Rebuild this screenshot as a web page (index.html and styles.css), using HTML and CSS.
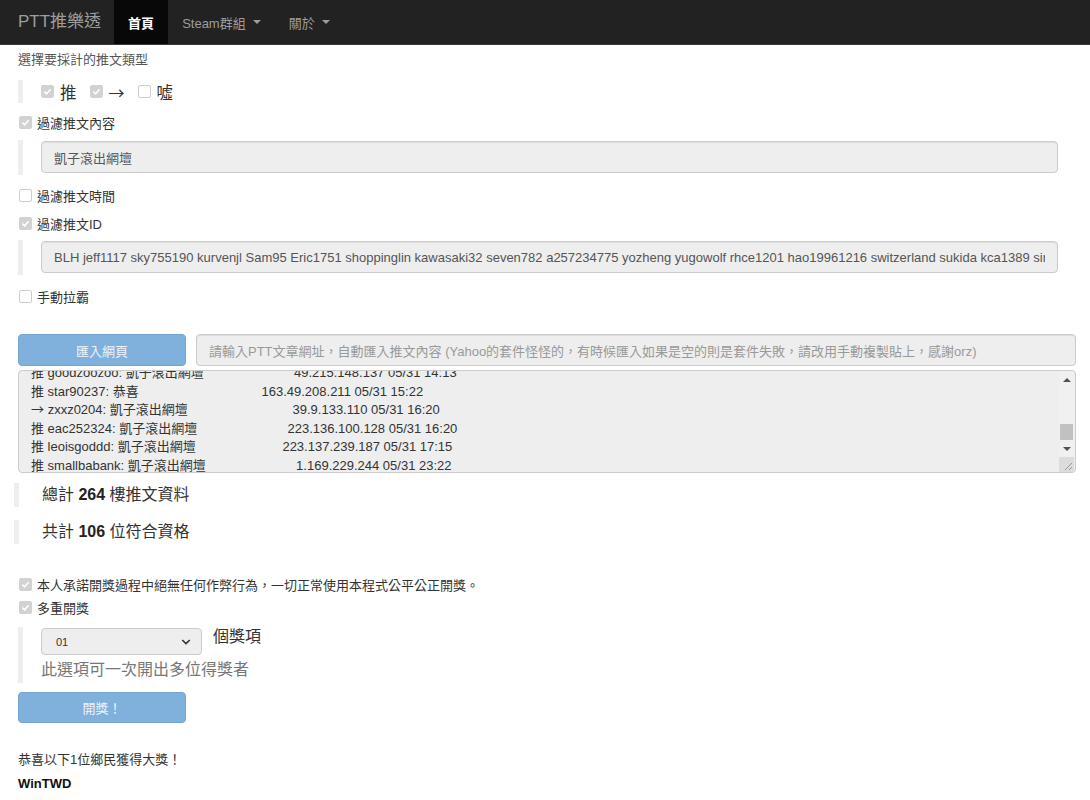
FILE: index.html
```html
<!DOCTYPE html>
<html lang="zh-Hant">
<head>
<meta charset="utf-8">
<title>PTT推樂透</title>
<link rel="stylesheet" href="styles.css">
</head>
<body>
<nav class="navbar">
  <div class="brand">PTT推樂透</div>
  <div class="nav-item active">首頁</div>
  <div class="nav-item">Steam群組<span class="caret"></span></div>
  <div class="nav-item">關於<span class="caret"></span></div>
</nav>

<main class="page">
  <div class="section-label">選擇要採計的推文類型</div>

  <div class="quote quote-types">
    <span class="cb checked"><svg viewBox="0 0 12 12"><path d="M2.6 6.2 L5 8.5 L9.4 3.6"/></svg></span><span class="type-text">推</span>
    <span class="cb checked"><svg viewBox="0 0 12 12"><path d="M2.6 6.2 L5 8.5 L9.4 3.6"/></svg></span><span class="type-text type-arrow">→</span>
    <span class="cb"></span><span class="type-text">噓</span>
  </div>

  <div class="check-row row-content"><span class="cb checked"><svg viewBox="0 0 12 12"><path d="M2.6 6.2 L5 8.5 L9.4 3.6"/></svg></span>過濾推文內容</div>
  <div class="quote quote-input q-content">
    <div class="control"><div class="control-text">凱子滾出網壇</div></div>
  </div>

  <div class="check-row row-time"><span class="cb"></span>過濾推文時間</div>
  <div class="check-row row-id"><span class="cb checked"><svg viewBox="0 0 12 12"><path d="M2.6 6.2 L5 8.5 L9.4 3.6"/></svg></span>過濾推文ID</div>
  <div class="quote quote-input q-id">
    <div class="control"><div class="control-text">BLH jeff1117 sky755190 kurvenjl Sam95 Eric1751 shoppinglin kawasaki32 seven782 a257234775 yozheng yugowolf rhce1201 hao19961216 switzerland sukida kca1389 sirius0912 mayday55</div></div>
  </div>

  <div class="check-row row-manual"><span class="cb"></span>手動拉霸</div>

  <div class="import-row">
    <div class="btn">匯入網頁</div>
    <div class="control url-input"><div class="control-text placeholder">請輸入PTT文章網址，自動匯入推文內容 (Yahoo的套件怪怪的，有時候匯入如果是空的則是套件失敗，請改用手動複製貼上，感謝orz)</div></div>
  </div>

  <div class="textarea">
    <div class="ta-view">
<pre class="ta-content">推 goodzoozoo: 凱子滾出網壇                         49.215.148.137 05/31 14:13
推 star90237: 恭喜                                  163.49.208.211 05/31 15:22
<span class="ta-arrow">→</span> zxxz0204: 凱子滾出網壇                             39.9.133.110 05/31 16:20
推 eac252324: 凱子滾出網壇                         223.136.100.128 05/31 16:20
推 leoisgoddd: 凱子滾出網壇                        223.137.239.187 05/31 17:15
推 smallbabank: 凱子滾出網壇                         1.169.229.244 05/31 23:22</pre>
    </div>
    <div class="scrollbar">
      <div class="sb-btn"><span class="arrow-up"></span></div>
      <div class="sb-track"><div class="sb-thumb"></div></div>
      <div class="sb-btn"><span class="arrow-down"></span></div>
      <div class="sb-corner"><svg viewBox="0 0 15 15"><path d="M13 6 L6 13 M13 10 L10 13"/></svg></div>
    </div>
  </div>

  <div class="quote stat stat-1">總計 <b>264</b> 樓推文資料</div>
  <div class="quote stat stat-2">共計 <b>106</b> 位符合資格</div>

  <div class="check-row row-promise"><span class="cb checked"><svg viewBox="0 0 12 12"><path d="M2.6 6.2 L5 8.5 L9.4 3.6"/></svg></span>本人承諾開獎過程中絕無任何作弊行為，一切正常使用本程式公平公正開獎。</div>
  <div class="check-row row-multi"><span class="cb checked"><svg viewBox="0 0 12 12"><path d="M2.6 6.2 L5 8.5 L9.4 3.6"/></svg></span>多重開獎</div>

  <div class="quote quote-multi">
    <div class="multi-line">
      <div class="select"><span>01</span><svg viewBox="0 0 10 6"><path d="M1.2 1 L5 4.6 L8.8 1"/></svg></div>
      <span class="multi-unit">個獎項</span>
    </div>
    <div class="multi-help">此選項可一次開出多位得獎者</div>
  </div>

  <div class="btn btn-draw">開獎！</div>

  <div class="result-title">恭喜以下1位鄉民獲得大獎！</div>
  <div class="winner">WinTWD</div>
</main>
</body>
</html>
```

FILE: styles.css
```css
* { box-sizing: border-box; }

body {
  margin: 0;
  font-family: "Liberation Sans", "Noto Sans CJK TC", sans-serif;
  font-size: 13px;
  color: #333;
  background: #fff;
}

/* ---------- navbar ---------- */
.navbar {
  display: flex;
  align-items: stretch;
  height: 45px;
  background: #222;
  border-bottom: 1px solid #3a3a3a;
}
.brand {
  padding: 0 13px 0 18px;
  line-height: 44px;
  font-size: 17px;
  color: #9d9d9d;
}
.nav-item {
  display: flex;
  align-items: center;
  padding: 0 14px;
  font-size: 13px;
  color: #9d9d9d;
}
.nav-item.active {
  background: #080808;
  color: #fff;
  font-weight: bold;
}
.caret {
  display: inline-block;
  margin-left: 7px;
  border-top: 4px solid #9d9d9d;
  border-left: 4px solid transparent;
  border-right: 4px solid transparent;
}

/* ---------- page ---------- */
.page {
  padding: 0 14px 0 18px;
}
.section-label {
  height: 30px;
  line-height: 30px;
  font-size: 13px;
  color: #555;
}

.quote {
  border-left: 5px solid #eee;
  padding: 0 18px;
}

/* checkbox */
.cb {
  display: inline-flex;
  align-items: center;
  justify-content: center;
  flex: none;
  width: 13px;
  height: 13px;
  border: 1px solid #cdcdcd;
  border-radius: 2px;
  background: #fff;
}
.cb.checked {
  background: #d2d2d2;
  border-color: #d2d2d2;
}
.cb svg {
  width: 11px;
  height: 11px;
}
.cb svg path {
  fill: none;
  stroke: #fff;
  stroke-width: 1.7;
}

.quote-types {
  margin-top: 5px;
  height: 23px;
  display: flex;
  align-items: center;
}
.quote-types .cb { margin-right: 6px; }
.type-text {
  font-size: 16.5px;
  color: #333;
  margin-right: 13px;
}
.type-arrow {
  font-family: "Noto Sans CJK TC", sans-serif;
  font-size: 16px;
}

.check-row {
  height: 20px;
  display: flex;
  align-items: center;
  padding-bottom: 2px;
  font-size: 13px;
  color: #333;
}
.check-row .cb {
  margin-left: 1px;
  margin-right: 5px;
}
.row-content { margin-top: 10px; }
.q-content { margin-top: 7px; }
.row-time { margin-top: 11px; }
.row-id { margin-top: 8px; }
.q-id { margin-top: 6px; }
.row-manual { margin-top: 12px; }

.quote-input {
  height: 35px;
  padding-top: 1px;
}
.control {
  height: 32px;
  display: flex;
  align-items: center;
  padding: 0 12px;
  background: #eee;
  border: 1px solid #ccc;
  border-radius: 4px;
  box-shadow: inset 0 1px 1px rgba(0,0,0,.075);
}
.control-text {
  flex: 1;
  overflow: hidden;
  white-space: nowrap;
  font-size: 13px;
  color: #555;
}
.placeholder { color: #999; }

/* ---------- import ---------- */
.import-row {
  margin-top: 27px;
  display: flex;
  gap: 10px;
  height: 32px;
}
.btn {
  width: 168px;
  height: 32px;
  display: flex;
  align-items: center;
  justify-content: center;
  background: #80b0dc;
  border: 1px solid #74a4d2;
  border-radius: 4px;
  color: #eef4fa;
  font-size: 13px;
}
.url-input {
  flex: 1;
  height: 32px;
}

/* ---------- textarea ---------- */
.textarea {
  margin-top: 4px;
  height: 103px;
  display: flex;
  background: #eee;
  border: 1px solid #ccc;
  border-radius: 4px;
  overflow: hidden;
}
.ta-view {
  flex: 1;
  overflow: hidden;
  padding-left: 12px;
}
.ta-content {
  margin: -7px 0 0;
  font-family: "Liberation Sans", "Noto Sans CJK TC", sans-serif;
  font-size: 13px;
  line-height: 18.5px;
  color: #333;
  white-space: pre;
}
.ta-arrow {
  font-family: "Noto Sans CJK TC", sans-serif;
  line-height: 1;
}
.scrollbar {
  width: 15px;
  margin-right: 1px;
  display: flex;
  flex-direction: column;
  background: #f0f0f0;
}
.sb-btn {
  height: 17px;
  display: flex;
  align-items: center;
  justify-content: center;
}
.arrow-up {
  border-bottom: 4px solid #505050;
  border-left: 4px solid transparent;
  border-right: 4px solid transparent;
}
.arrow-down {
  border-top: 4px solid #505050;
  border-left: 4px solid transparent;
  border-right: 4px solid transparent;
}
.sb-track {
  flex: 1;
  display: flex;
  flex-direction: column;
  justify-content: flex-end;
  padding: 0 1px;
}
.sb-thumb {
  height: 16px;
  background: #c1c1c1;
}
.sb-corner {
  height: 15px;
  background: #dcdcdc;
  display: flex;
}
.sb-corner svg { width: 15px; height: 15px; }
.sb-corner svg path {
  fill: none;
  stroke: #999;
  stroke-width: 1;
}

/* ---------- stats ---------- */
.stat {
  margin-left: -4px;
  height: 24px;
  line-height: 24px;
  padding-left: 23px;
  font-size: 16px;
  color: #333;
}
.stat b { color: #222; }
.stat-1 { margin-top: 10px; }
.stat-2 { margin-top: 13px; }

.row-promise { margin-top: 31px; }
.row-multi { margin-top: 3px; }

.quote-multi {
  margin-top: 9px;
  height: 56px;
  padding-top: 1px;
}
.multi-line {
  display: flex;
  align-items: flex-start;
  height: 27px;
}
.select {
  width: 161px;
  height: 27px;
  display: flex;
  align-items: center;
  justify-content: space-between;
  padding: 0 10px 0 14px;
  background: #eee;
  border: 1px solid #ccc;
  border-radius: 4px;
  font-size: 11px;
  color: #333;
}
.select svg { width: 10px; height: 6px; }
.select svg path {
  fill: none;
  stroke: #333;
  stroke-width: 1.6;
}
.multi-unit {
  margin-left: 11px;
  line-height: 18px;
  font-size: 16px;
  color: #333;
}
.multi-help {
  margin-top: 3px;
  height: 24px;
  line-height: 24px;
  font-size: 16px;
  color: #777;
}

.btn-draw {
  margin-top: 9px;
  height: 31px;
}

.result-title {
  margin-top: 27px;
  height: 20px;
  line-height: 20px;
  font-size: 13px;
}
.winner {
  margin-top: 4px;
  height: 20px;
  line-height: 20px;
  font-size: 13px;
  font-weight: bold;
  color: #111;
}
```
